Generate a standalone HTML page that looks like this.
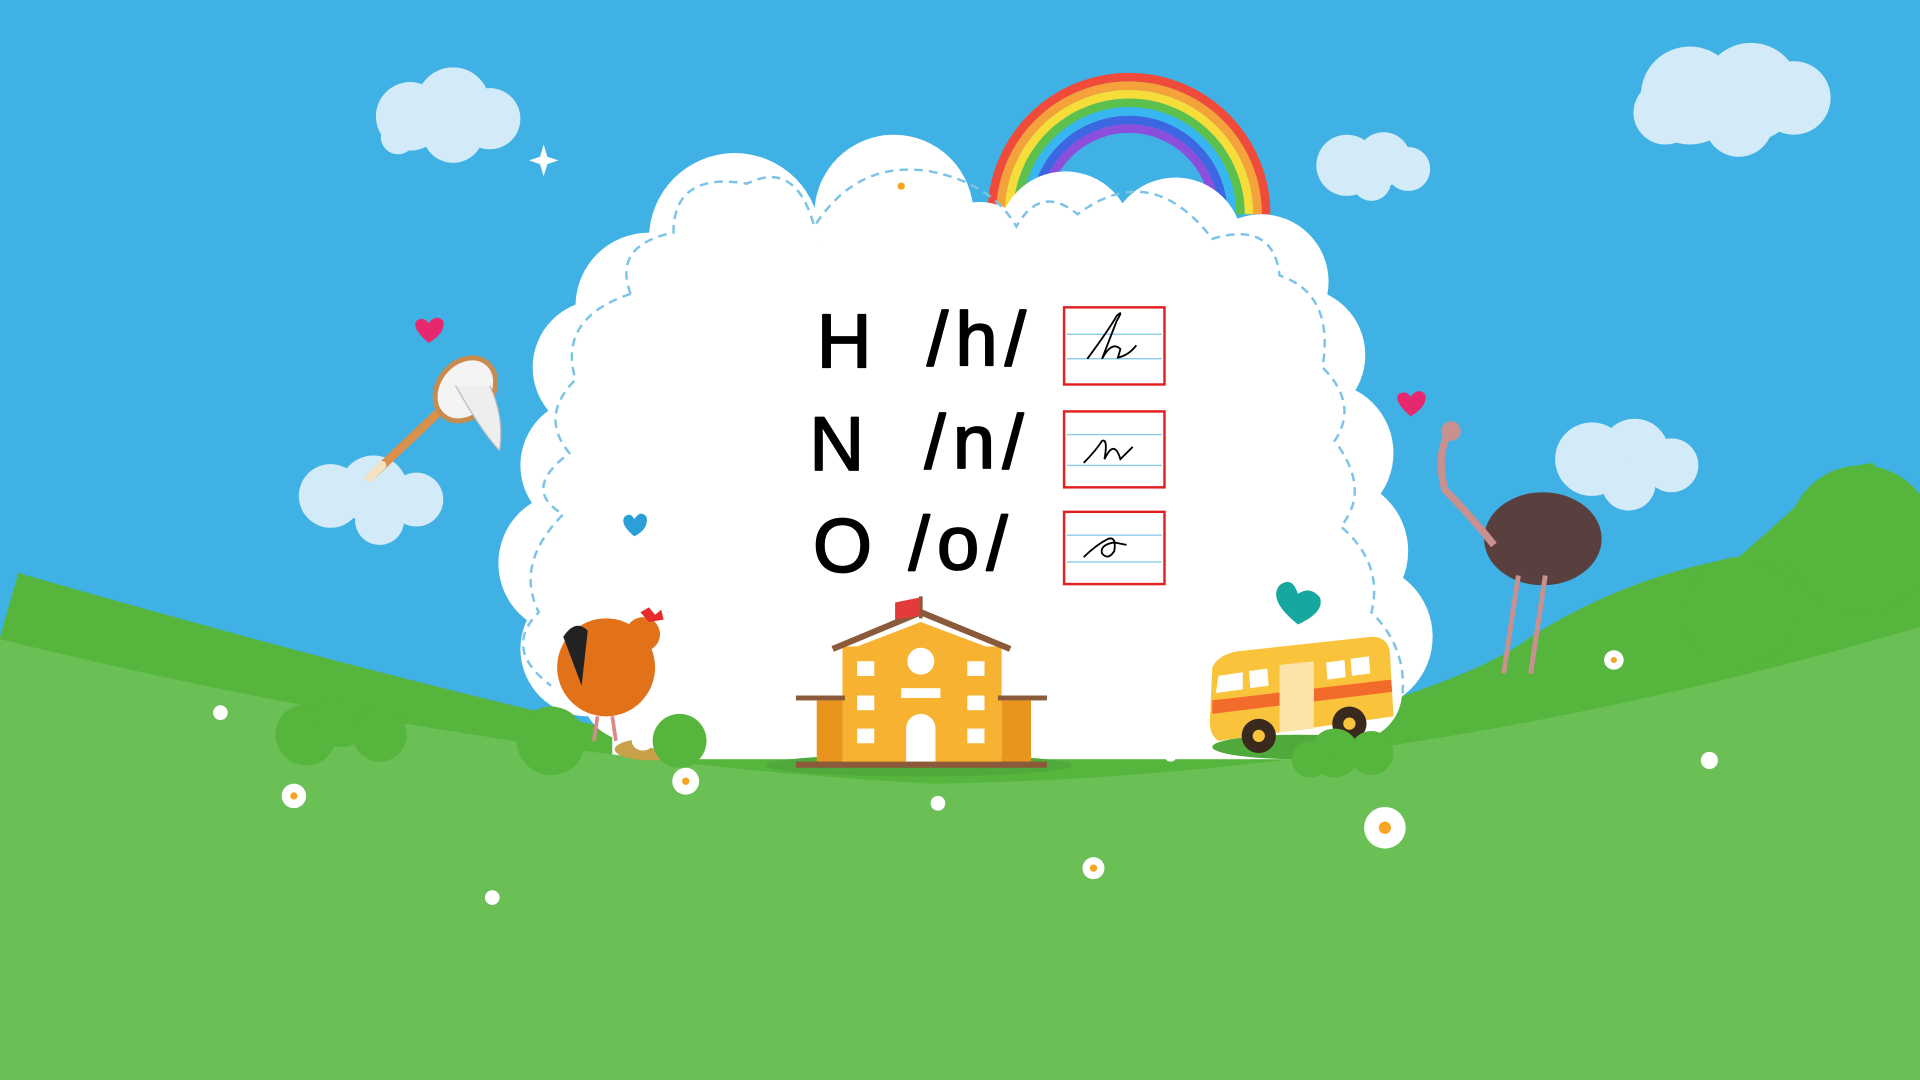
<!DOCTYPE html>
<html><head><meta charset="utf-8"><style>html,body{margin:0;padding:0;width:1920px;height:1080px;overflow:hidden;background:#3fb0e3}svg{display:block}</style></head>
<body>
<svg width="1920" height="1080" viewBox="0 0 1568 882" xmlns="http://www.w3.org/2000/svg">
<rect width="1568" height="882" fill="#40b1e4"/>
<g fill="#d3ebf8">
<circle cx="335" cy="95" r="28"/><circle cx="370" cy="85" r="30"/><circle cx="400" cy="97" r="25"/><circle cx="370" cy="108" r="25"/><circle cx="325" cy="112" r="14"/>
<circle cx="1380" cy="78" r="40"/><circle cx="1430" cy="75" r="40"/><circle cx="1465" cy="80" r="30"/><circle cx="1360" cy="92" r="26"/><circle cx="1420" cy="100" r="28"/>
<circle cx="1100" cy="135" r="25"/><circle cx="1130" cy="130" r="22"/><circle cx="1150" cy="138" r="18"/><circle cx="1120" cy="148" r="16"/>
<circle cx="1300" cy="375" r="30"/><circle cx="1335" cy="370" r="28"/><circle cx="1365" cy="380" r="22"/><circle cx="1330" cy="395" r="22"/>
<circle cx="270" cy="405" r="26"/><circle cx="305" cy="400" r="28"/><circle cx="340" cy="408" r="22"/><circle cx="310" cy="425" r="20"/>
</g>
<path d="M0 520 L15 468 Q300 550 520 600 L1000 610 Q1200 560 1250 520 Q1330 470 1420 455 Q1460 420 1470 410 Q1500 380 1530 378 L1568 470 L1568 882 L0 882Z" fill="#56b53c"/>
<circle cx="1520" cy="440" r="60" fill="#56b53c"/>
<circle cx="1420" cy="500" r="45" fill="#56b53c"/>
<g fill="none" stroke-width="7">
<path d="M810 175 A112 112 0 0 1 1034 175" stroke="#f04b3a"/>
<path d="M817 175 A105 105 0 0 1 1027 175" stroke="#f6a23a"/>
<path d="M824 175 A98 98 0 0 1 1020 175" stroke="#f7dd3a"/>
<path d="M831 175 A91 91 0 0 1 1013 175" stroke="#5cc04d"/>
<path d="M838 175 A84 84 0 0 1 1006 175" stroke="#38b6ef"/>
<path d="M845 175 A77 77 0 0 1 999 175" stroke="#3d66e2"/>
<path d="M852 175 A70 70 0 0 1 992 175" stroke="#8b4fdc"/>
</g>
<g fill="#fff">
<circle cx="600" cy="195" r="70"/><circle cx="730" cy="175" r="65"/><circle cx="800" cy="215" r="50"/><circle cx="870" cy="195" r="55"/><circle cx="960" cy="200" r="55"/><circle cx="1030" cy="230" r="55"/>
<circle cx="1060" cy="290" r="55"/><circle cx="1080" cy="370" r="58"/><circle cx="1090" cy="450" r="60"/><circle cx="1110" cy="520" r="60"/>
<circle cx="530" cy="250" r="60"/><circle cx="490" cy="300" r="55"/><circle cx="480" cy="380" r="55"/><circle cx="465" cy="460" r="58"/><circle cx="480" cy="530" r="55"/>
<circle cx="515" cy="565" r="40"/><circle cx="1105" cy="565" r="40"/>
<rect x="540" y="200" width="520" height="100"/>
<rect x="500" y="260" width="600" height="360"/>
</g>
<path d="M0 522 Q400 620 760 640 Q1150 635 1568 512 L1568 882 L0 882Z" fill="#6abf55"/>
<path d="M515 240 Q500 200 550 190 Q550 140 610 150 Q650 130 665 185 Q700 130 760 140 Q810 150 830 185 Q850 150 880 175 Q940 130 990 195 Q1040 180 1045 225 Q1090 240 1080 300 Q1110 330 1090 360 Q1120 400 1095 430 Q1130 460 1120 500 Q1150 530 1145 570 M515 240 Q455 260 470 310 Q440 340 465 370 Q425 400 460 420 Q420 460 440 500 Q410 530 450 560" fill="none" stroke="#7cc3e8" stroke-width="2" stroke-dasharray="7 5"/>
<g font-family="Liberation Sans, sans-serif" font-size="62" fill="#000" stroke="#000" stroke-width="1.5" stroke-linejoin="round">
<text x="667" y="300">H</text><text x="757" y="298" letter-spacing="6">/h/</text>
<text x="661" y="384">N</text><text x="755" y="382" letter-spacing="6">/n/</text>
<text x="664" y="467">O</text><text x="742" y="465" letter-spacing="6">/o/</text>
</g>
<g fill="#fff" stroke="#e32020" stroke-width="2">
<rect x="869" y="251" width="82" height="63"/><rect x="869" y="336" width="82" height="62"/><rect x="869" y="418" width="82" height="59"/>
</g>
<g stroke="#7fc6ea" stroke-width="1">
<line x1="871" y1="273" x2="949" y2="273"/><line x1="871" y1="293" x2="949" y2="293"/>
<line x1="871" y1="355" x2="949" y2="355"/><line x1="871" y1="380" x2="949" y2="380"/>
<line x1="871" y1="437" x2="949" y2="437"/><line x1="871" y1="459" x2="949" y2="459"/>
</g>
<g fill="none" stroke="#000" stroke-width="1.5">
<path d="M888 293 Q905 270 912 258 Q918 252 912 262 Q905 280 900 293 Q908 278 915 285 L913 292 Q922 290 928 282"/>
<path d="M885 378 Q895 368 900 360 Q905 358 902 375 Q910 358 915 375 Q920 370 925 365"/>
<path d="M885 455 Q895 445 905 440 Q912 438 910 450 Q905 458 900 452 Q898 445 910 443 L920 445"/>
</g>
<ellipse cx="750" cy="625" rx="125" ry="9" fill="#4fa93b"/>
<rect x="667" y="572" width="24" height="50" fill="#e8941d"/><rect x="818" y="572" width="24" height="50" fill="#e8941d"/>
<rect x="688" y="528" width="130" height="95" fill="#f8b231"/>
<path d="M680 530 L752 500 L825 530" fill="none" stroke="#8b5a3a" stroke-width="5"/>
<path d="M700 528 L752 508 L805 528Z" fill="#f8b231"/>
<circle cx="752" cy="540" r="11" fill="#fff"/>
<path d="M740 622 L740 595 A12 12 0 0 1 764 595 L764 622Z" fill="#fff"/>
<rect x="736" y="562" width="32" height="8" fill="#fff"/>
<g fill="#fff"><rect x="700" y="540" width="14" height="12"/><rect x="700" y="568" width="14" height="12"/><rect x="700" y="595" width="14" height="12"/><rect x="790" y="540" width="14" height="12"/><rect x="790" y="568" width="14" height="12"/><rect x="790" y="595" width="14" height="12"/></g>
<rect x="650" y="622" width="205" height="5" fill="#8b5a3a"/>
<rect x="650" y="568" width="40" height="4" fill="#8b5a3a"/><rect x="815" y="568" width="40" height="4" fill="#8b5a3a"/>
<line x1="752" y1="487" x2="752" y2="505" stroke="#8b5a3a" stroke-width="3"/>
<path d="M731 492 L751 488 L751 503 L731 506Z" fill="#e33b3b"/>
<ellipse cx="1060" cy="610" rx="70" ry="10" fill="#4fa93b"/>
<path d="M990 545 Q995 535 1010 532 L1120 520 Q1133 520 1135 532 L1138 585 L995 605 Q988 600 988 590Z" fill="#f9c33c"/>
<path d="M990 572 L1136 555 L1137 565 L990 583Z" fill="#f36b2b"/>
<path d="M1045 543 L1073 540 L1073 595 L1045 598Z" fill="#fbe3a9"/>
<g fill="#fff"><path d="M995 552 L1015 549 L1015 563 L993 566Z"/><path d="M1020 548 L1035 546 L1036 560 L1021 562Z"/><path d="M1083 541 L1098 539 L1099 553 L1084 555Z"/><path d="M1103 538 L1118 536 L1119 550 L1104 552Z"/></g>
<circle cx="1028" cy="601" r="14" fill="#3a2a1e"/><circle cx="1028" cy="601" r="5" fill="#f9c33c"/>
<circle cx="1102" cy="591" r="14" fill="#3a2a1e"/><circle cx="1102" cy="591" r="5" fill="#f9c33c"/>
<circle cx="1090" cy="615" r="20" fill="#56b53c"/><circle cx="1120" cy="615" r="18" fill="#56b53c"/><circle cx="1070" cy="620" r="15" fill="#56b53c"/>
<path d="M1060 510 Q1035 490 1045 478 Q1055 470 1060 485 Q1070 478 1078 488 Q1082 500 1060 510Z" fill="#16a8a0"/>
<path d="M350 280 Q336 268 340 262 Q346 258 350 264 Q356 256 362 262 Q364 272 350 280Z" fill="#e8286e"/>
<path d="M1152 340 Q1138 328 1142 322 Q1148 318 1152 324 Q1158 316 1164 322 Q1166 332 1152 340Z" fill="#e8286e"/>
<path d="M518 438 Q506 428 510 422 Q515 418 518 424 Q523 416 528 422 Q530 432 518 438Z" fill="#2a9fd8"/>
<path d="M444 118 L447 128 L456 131 L447 134 L444 144 L441 134 L432 131 L441 128Z" fill="#fff"/>
<line x1="302" y1="390" x2="360" y2="335" stroke="#d9904a" stroke-width="7" stroke-linecap="round"/>
<line x1="302" y1="390" x2="312" y2="380" stroke="#f3e3c4" stroke-width="7" stroke-linecap="round"/>
<ellipse cx="380" cy="318" rx="22" ry="28" fill="#f4f4f4" stroke="#c88a4e" stroke-width="4" transform="rotate(40 380 318)"/>
<path d="M372 315 Q395 355 408 368 Q412 340 400 315" fill="#eee" stroke="#bbb"/>
<ellipse cx="495" cy="545" rx="40" ry="40" fill="#e2721a"/>
<path d="M460 520 Q470 505 480 515 L475 560Z" fill="#222"/>
<circle cx="525" cy="518" r="14" fill="#e2721a"/>
<path d="M523 500 L530 496 L535 502 L540 498 L542 506 L530 508Z" fill="#e52b2b"/>
<path d="M488 585 L485 605 M500 585 L503 605" stroke="#d98a88" stroke-width="3"/>
<ellipse cx="532" cy="612" rx="30" ry="9" fill="#c9a14a"/>
<ellipse cx="525" cy="605" rx="9" ry="8" fill="#fff"/><ellipse cx="537" cy="604" rx="9" ry="8" fill="#fff"/>
<circle cx="450" cy="605" r="28" fill="#56b53c"/><circle cx="555" cy="605" r="22" fill="#56b53c"/>
<ellipse cx="1260" cy="440" rx="48" ry="38" fill="#5a3f3f"/>
<path d="M1220 445 Q1200 420 1180 400 Q1172 370 1185 350" fill="none" stroke="#c99090" stroke-width="6"/>
<circle cx="1185" cy="352" r="8" fill="#c99090"/>
<path d="M1240 470 L1228 550 M1262 470 L1250 550" stroke="#c99090" stroke-width="4"/>
<circle cx="250" cy="600" r="25" fill="#56b53c"/><circle cx="280" cy="590" r="20" fill="#56b53c"/><circle cx="310" cy="600" r="22" fill="#56b53c"/>
<g fill="#fff">
<circle cx="180" cy="582" r="6"/><circle cx="240" cy="650" r="10"/><circle cx="402" cy="733" r="6"/><circle cx="560" cy="638" r="11"/><circle cx="766" cy="656" r="6"/><circle cx="893" cy="709" r="9"/><circle cx="956" cy="617" r="5"/><circle cx="1131" cy="676" r="17"/><circle cx="1318" cy="539" r="8"/><circle cx="1396" cy="621" r="7"/>
</g>
<g fill="#f5a623">
<circle cx="240" cy="650" r="3"/><circle cx="560" cy="638" r="3"/><circle cx="893" cy="709" r="3"/><circle cx="1131" cy="676" r="5"/><circle cx="1318" cy="539" r="2.5"/><circle cx="736" cy="152" r="3"/>
</g>
</svg>
</body></html>
